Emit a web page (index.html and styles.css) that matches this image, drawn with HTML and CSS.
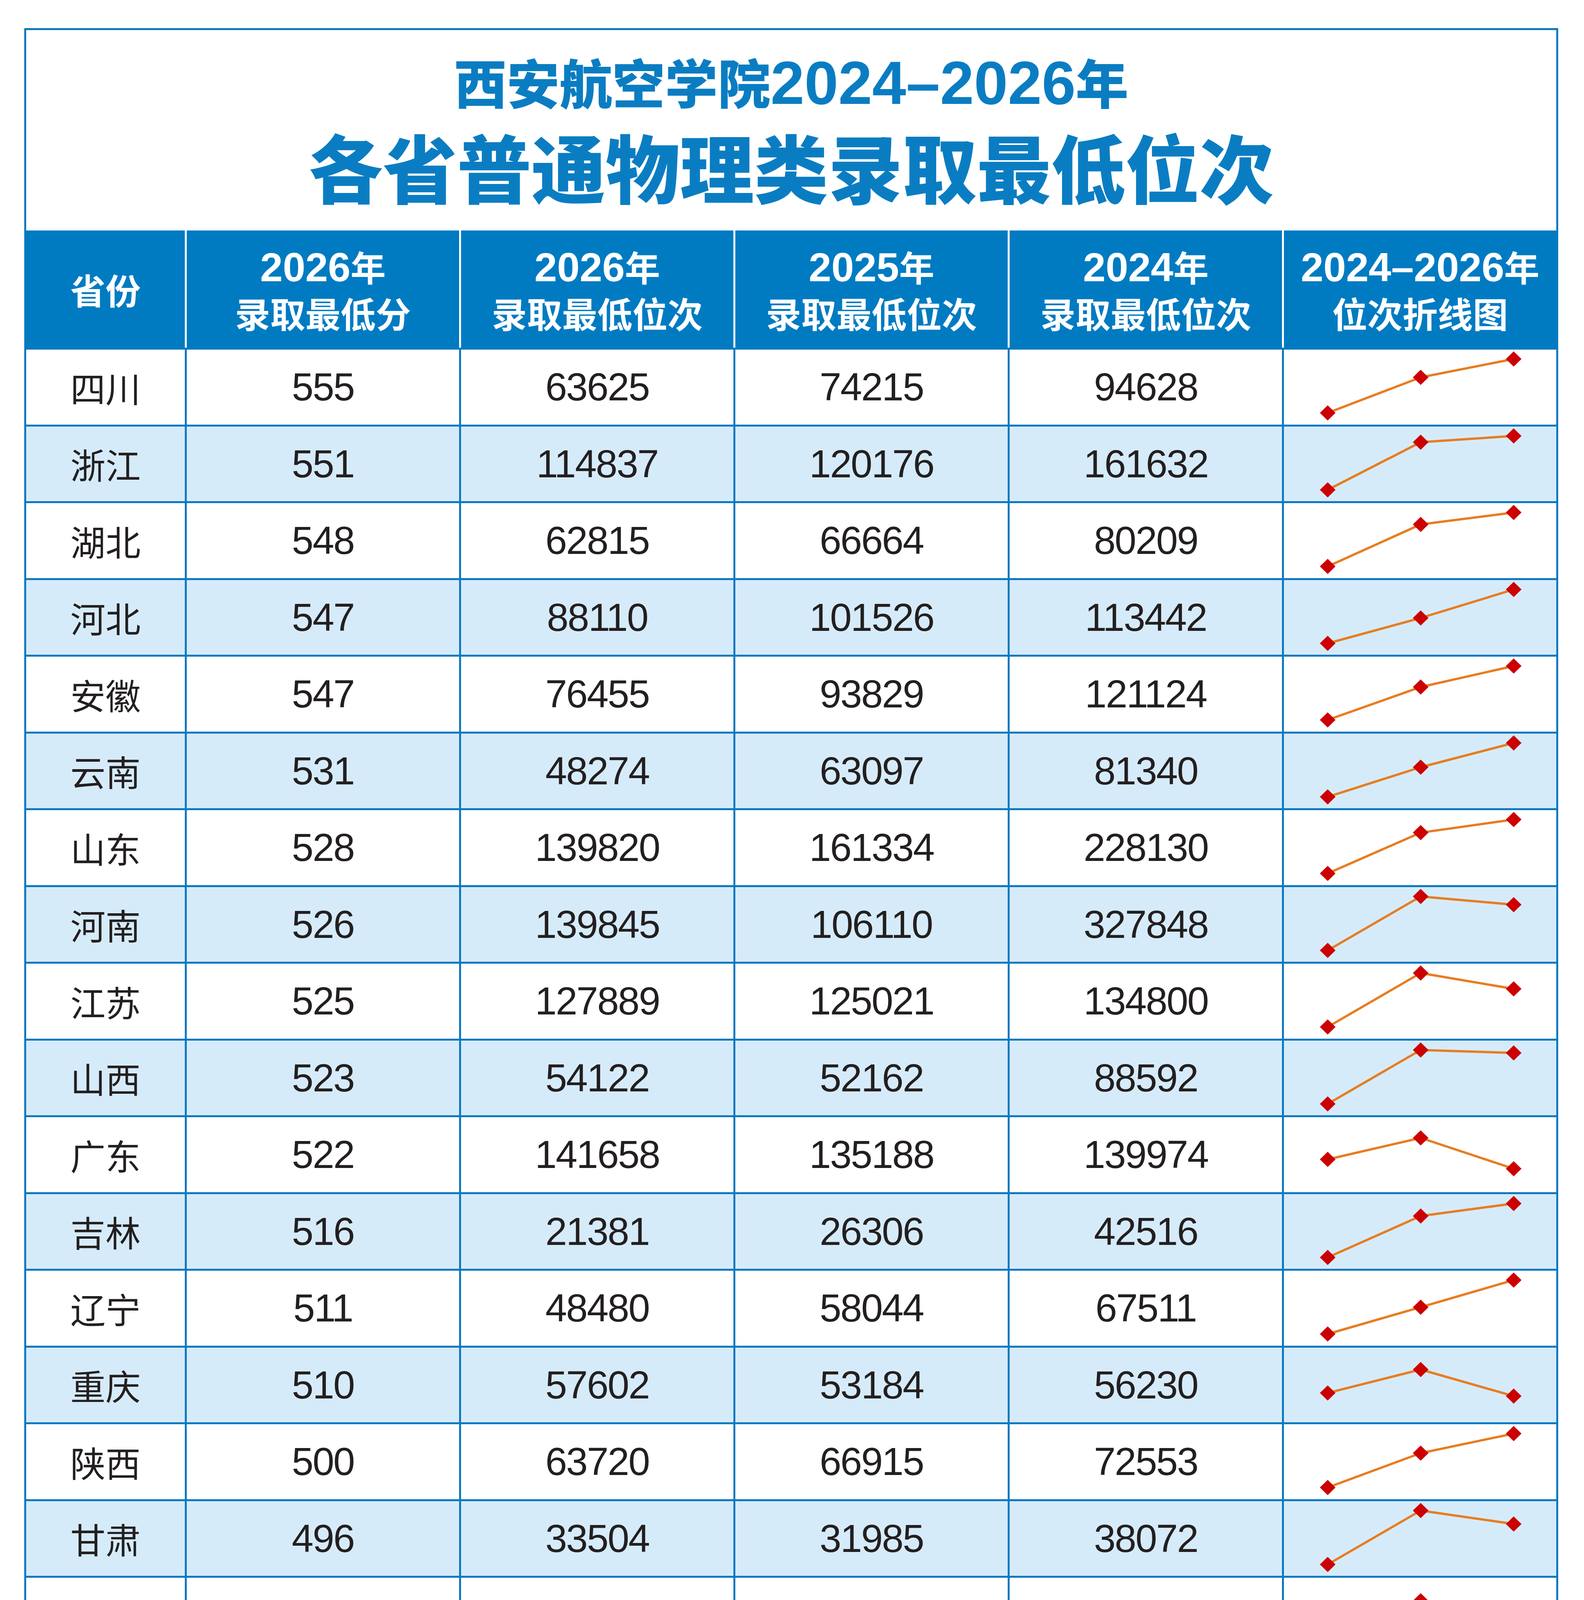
FILE: index.html
```html
<!DOCTYPE html>
<html lang="zh-CN">
<head>
<meta charset="utf-8">
<title>西安航空学院2024–2026年各省普通物理类录取最低位次</title>
<link rel="stylesheet" href="styles.css">
</head>
<body>
<div class="sheet">
  <div class="title">
    <div class="title-1">西安航空学院<span class="num">2024–2026</span>年</div>
    <div class="title-2">各省普通物理类录取最低位次</div>
  </div>
  <div class="thead">
    <div class="th"><div>省份</div></div>
    <div class="th"><div><span class="num">2026</span>年</div><div>录取最低分</div></div>
    <div class="th"><div><span class="num">2026</span>年</div><div>录取最低位次</div></div>
    <div class="th"><div><span class="num">2025</span>年</div><div>录取最低位次</div></div>
    <div class="th"><div><span class="num">2024</span>年</div><div>录取最低位次</div></div>
    <div class="th"><div><span class="num">2024–2026</span>年</div><div>位次折线图</div></div>
  </div>
  <div class="tbody">
    <div class="row"><div class="cell prov">四川</div><div class="cell">555</div><div class="cell">63625</div><div class="cell">74215</div><div class="cell">94628</div><div class="cell spark"><svg viewBox="0 0 697 191.5"><polyline points="112,162 350,71 588,24"/></svg></div></div>
    <div class="row alt"><div class="cell prov">浙江</div><div class="cell">551</div><div class="cell">114837</div><div class="cell">120176</div><div class="cell">161632</div><div class="cell spark"><svg viewBox="0 0 697 191.5"><polyline points="112,162 350,40 588,24"/></svg></div></div>
    <div class="row"><div class="cell prov">湖北</div><div class="cell">548</div><div class="cell">62815</div><div class="cell">66664</div><div class="cell">80209</div><div class="cell spark"><svg viewBox="0 0 697 191.5"><polyline points="112,162 350,54.5 588,24"/></svg></div></div>
    <div class="row alt"><div class="cell prov">河北</div><div class="cell">547</div><div class="cell">88110</div><div class="cell">101526</div><div class="cell">113442</div><div class="cell spark"><svg viewBox="0 0 697 191.5"><polyline points="112,162 350,97 588,24"/></svg></div></div>
    <div class="row"><div class="cell prov">安徽</div><div class="cell">547</div><div class="cell">76455</div><div class="cell">93829</div><div class="cell">121124</div><div class="cell spark"><svg viewBox="0 0 697 191.5"><polyline points="112,162 350,77.7 588,24"/></svg></div></div>
    <div class="row alt"><div class="cell prov">云南</div><div class="cell">531</div><div class="cell">48274</div><div class="cell">63097</div><div class="cell">81340</div><div class="cell spark"><svg viewBox="0 0 697 191.5"><polyline points="112,162 350,86 588,24"/></svg></div></div>
    <div class="row"><div class="cell prov">山东</div><div class="cell">528</div><div class="cell">139820</div><div class="cell">161334</div><div class="cell">228130</div><div class="cell spark"><svg viewBox="0 0 697 191.5"><polyline points="112,162 350,57.6 588,24"/></svg></div></div>
    <div class="row alt"><div class="cell prov">河南</div><div class="cell">526</div><div class="cell">139845</div><div class="cell">106110</div><div class="cell">327848</div><div class="cell spark"><svg viewBox="0 0 697 191.5"><polyline points="112,162 350,24 588,45"/></svg></div></div>
    <div class="row"><div class="cell prov">江苏</div><div class="cell">525</div><div class="cell">127889</div><div class="cell">125021</div><div class="cell">134800</div><div class="cell spark"><svg viewBox="0 0 697 191.5"><polyline points="112,162 350,24 588,64.5"/></svg></div></div>
    <div class="row alt"><div class="cell prov">山西</div><div class="cell">523</div><div class="cell">54122</div><div class="cell">52162</div><div class="cell">88592</div><div class="cell spark"><svg viewBox="0 0 697 191.5"><polyline points="112,162 350,24 588,31.4"/></svg></div></div>
    <div class="row"><div class="cell prov">广东</div><div class="cell">522</div><div class="cell">141658</div><div class="cell">135188</div><div class="cell">139974</div><div class="cell spark"><svg viewBox="0 0 697 191.5"><polyline points="112,108 350,53 588,132"/></svg></div></div>
    <div class="row alt"><div class="cell prov">吉林</div><div class="cell">516</div><div class="cell">21381</div><div class="cell">26306</div><div class="cell">42516</div><div class="cell spark"><svg viewBox="0 0 697 191.5"><polyline points="112,162 350,56 588,24"/></svg></div></div>
    <div class="row"><div class="cell prov">辽宁</div><div class="cell">511</div><div class="cell">48480</div><div class="cell">58044</div><div class="cell">67511</div><div class="cell spark"><svg viewBox="0 0 697 191.5"><polyline points="112,162 350,93.4 588,24"/></svg></div></div>
    <div class="row alt"><div class="cell prov">重庆</div><div class="cell">510</div><div class="cell">57602</div><div class="cell">53184</div><div class="cell">56230</div><div class="cell spark"><svg viewBox="0 0 697 191.5"><polyline points="112,116 350,56 588,124"/></svg></div></div>
    <div class="row"><div class="cell prov">陕西</div><div class="cell">500</div><div class="cell">63720</div><div class="cell">66915</div><div class="cell">72553</div><div class="cell spark"><svg viewBox="0 0 697 191.5"><polyline points="112,162 350,74 588,24"/></svg></div></div>
    <div class="row alt"><div class="cell prov">甘肃</div><div class="cell">496</div><div class="cell">33504</div><div class="cell">31985</div><div class="cell">38072</div><div class="cell spark"><svg viewBox="0 0 697 191.5"><polyline points="112,162 350,24 588,58.4"/></svg></div></div>
    <div class="row"><div class="cell prov">江西</div><div class="cell">496</div><div class="cell">92314</div><div class="cell">76036</div><div class="cell">86464</div><div class="cell spark"><svg viewBox="0 0 697 191.5"><polyline points="112,112 350,59 588,127"/></svg></div></div>
    <div class="row alt"><div class="cell prov">贵州</div><div class="cell">491</div><div class="cell">68454</div><div class="cell">73890</div><div class="cell">91299</div><div class="cell spark"><svg viewBox="0 0 697 191.5"><polyline points="112,162 350,57 588,24"/></svg></div></div>
    <div class="row"><div class="cell prov">湖南</div><div class="cell">491</div><div class="cell">114810</div><div class="cell">119396</div><div class="cell">124739</div><div class="cell spark"><svg viewBox="0 0 697 191.5"><polyline points="112,162 350,88 588,24"/></svg></div></div>
    <div class="row alt"><div class="cell prov">内蒙古</div><div class="cell">486</div><div class="cell">32575</div><div class="cell">34211</div><div class="cell">41539</div><div class="cell spark"><svg viewBox="0 0 697 191.5"><polyline points="112,162 350,49 588,24"/></svg></div></div>
    <div class="row"><div class="cell prov">广西</div><div class="cell">480</div><div class="cell">82924</div><div class="cell">90446</div><div class="cell">119236</div><div class="cell spark"><svg viewBox="0 0 697 191.5"><polyline points="112,162 350,52.6 588,24"/></svg></div></div>
    <div class="row alt"><div class="cell prov">宁夏</div><div class="cell">462</div><div class="cell">12714</div><div class="cell">14615</div><div class="cell">16846</div><div class="cell spark"><svg viewBox="0 0 697 191.5"><polyline points="112,162 350,87.5 588,24"/></svg></div></div>
    <div class="row"><div class="cell prov">黑龙江</div><div class="cell">460</div><div class="cell">41966</div><div class="cell">34920</div><div class="cell">42937</div><div class="cell spark"><svg viewBox="0 0 697 191.5"><polyline points="112,134 350,42 588,81"/></svg></div></div>
    <div class="row alt"><div class="cell prov">青海</div><div class="cell">402</div><div class="cell">12408</div><div class="cell">13268</div><div class="cell">14059</div><div class="cell spark"><svg viewBox="0 0 697 191.5"><polyline points="112,162 350,96 588,24"/></svg></div></div>
  </div>
</div>
<svg class="defs" width="0" height="0" aria-hidden="true">
  <defs>
    <marker id="dm" viewBox="-21 -21 42 42" markerWidth="42" markerHeight="42" markerUnits="userSpaceOnUse" refX="0" refY="0" orient="0">
      <path d="M0 -19.5 L20 0 L0 19.5 L-20 0 Z" fill="#cc0000"/>
    </marker>
  </defs>
</svg>
</body>
</html>
```
FILE: styles.css
```css
body {
  margin: 0;
  background: #ffffff;
}

.sheet {
  box-sizing: border-box;
  width: 3926px;
  margin: 72px 0 0 62px;
  border: 5px solid #0b79bf;
  background: #ffffff;
}

.title {
  box-sizing: border-box;
  height: 513px;
  padding-top: 50px;
  text-align: center;
  color: #0a7dc2;
  font-family: "Noto Sans CJK SC", "Noto Sans", sans-serif;
  font-weight: 900;
}

.title-1 {
  font-size: 135px;
  line-height: 160px;
  height: 160px;
}

.title-1 .num {
  font-family: "Liberation Sans", "Noto Sans CJK SC", sans-serif;
  font-weight: 700;
  font-size: 156px;
}

.title-2 {
  font-size: 190px;
  line-height: 220px;
  height: 220px;
  margin-top: 27px;
}

.thead {
  display: grid;
  grid-template-columns: 406px repeat(5, 697px);
  column-gap: 5px;
  height: 300px;
  background: #ffffff;
}

.th {
  background: #007bc2;
  color: #ffffff;
  display: flex;
  flex-direction: column;
  align-items: center;
  justify-content: center;
  font-family: "Noto Sans CJK SC", sans-serif;
  font-weight: 700;
  font-size: 90px;
  line-height: 116px;
  white-space: nowrap;
}

.th .num {
  font-family: "Liberation Sans", "Noto Sans CJK SC", sans-serif;
  font-weight: 700;
  font-size: 104px;
}

.tbody {
  display: flex;
  flex-direction: column;
  gap: 5px;
  padding-top: 5px;
  background: #0b79bf;
}

.row {
  display: grid;
  grid-template-columns: 406px repeat(5, 697px);
  column-gap: 5px;
  height: 191.5px;
}

.cell {
  background: #ffffff;
  display: flex;
  align-items: center;
  justify-content: center;
  font-family: "Liberation Sans", "Noto Sans CJK SC", sans-serif;
  font-size: 100px;
  letter-spacing: -2.5px;
  color: #231f20;
}

.row.alt .cell {
  background: #d6ebfa;
}

.cell.prov {
  font-family: "Noto Sans CJK SC", sans-serif;
  font-size: 90px;
  letter-spacing: 0;
  font-weight: 400;
}

.cell.spark {
  display: block;
}

.spark svg {
  display: block;
  width: 100%;
  height: 100%;
}

.spark polyline {
  fill: none;
  stroke: #e67d22;
  stroke-width: 6;
  stroke-linejoin: round;
  marker-start: url(#dm);
  marker-mid: url(#dm);
  marker-end: url(#dm);
}

.defs {
  display: block;
  width: 0;
  height: 0;
  overflow: hidden;
}
```
